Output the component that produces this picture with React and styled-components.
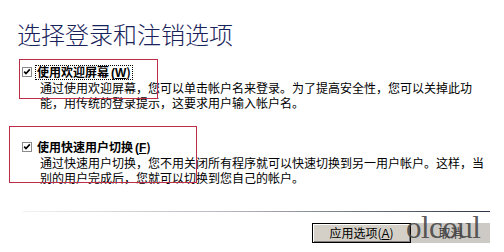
import React from 'react'
import styled, { createGlobalStyle } from 'styled-components'

const GlobalStyle = createGlobalStyle`
  html, body {
    margin: 0;
    padding: 0;
    background: #fff;
  }
  body {
    font-family: "Noto Sans CJK SC", "Noto Sans", sans-serif;
  }
`

const Page = styled.div`
  position: relative;
  width: 504px;
  height: 252px;
  box-sizing: border-box;
  padding-top: 20px;
  overflow: hidden;
  background: #fff;
`

const Title = styled.h1`
  margin: 0 0 0 17px;
  font-size: 24px;
  line-height: 28px;
  font-weight: 300;
  color: #18225a;
`

const Option = styled.div`
  margin-top: ${p => p.$gap}px;
  padding-left: 22px;
`

const LabelRow = styled.div`
  display: flex;
  align-items: center;
  gap: 3px;
  height: 14px;
`

const Label = styled.span`
  font-size: 12px;
  line-height: 12px;
  font-weight: 700;
  color: #000;
  white-space: nowrap;
  padding: 0 1px;
  border: 1px dotted ${p => (p.$focused ? '#000' : 'transparent')};
`

const Key = styled.span`
  font-family: "Liberation Sans", Arial, sans-serif;
  text-decoration: underline;
`

const Paren = styled.span`
  font-family: "Liberation Sans", Arial, sans-serif;
  margin-left: 2px;
`

const Desc = styled.div`
  margin: 2px 0 0 18px;
  font-size: 12px;
  line-height: 13px;
  color: #000;
  white-space: nowrap;
`

const Separator = styled.div`
  margin: 27px 14px 0 23px;
  height: 1px;
  background: linear-gradient(to right, #f2f2f2, #b4b6bd 45%, #2b3447);
`

const ButtonRow = styled.div`
  display: flex;
  justify-content: flex-end;
  margin: 11px 14px 0 0;
`

const Button = styled.button`
  box-sizing: border-box;
  width: ${p => p.$w}px;
  height: 20px;
  padding: 0;
  font-family: "Noto Sans CJK SC", sans-serif;
  font-size: 12px;
  line-height: 16px;
  color: ${p => (p.$faded ? '#3a3a3a' : '#000')};
  background: ${p => (p.$faded ? '#cdc9c4' : '#d4d0c8')};
  border: 1px solid ${p => (p.$faded ? '#cdc9c4' : '#000')};
  box-shadow: ${p =>
    p.$faded ? 'none' : 'inset 1px 1px #fff, inset -1px -1px #808080'};
`

const Mark = styled.div`
  position: absolute;
  left: ${p => p.$x}px;
  top: ${p => p.$y}px;
  width: ${p => p.$w}px;
  height: ${p => p.$h}px;
  border: 1px solid #bf2c45;
  box-sizing: border-box;
  pointer-events: none;
`

const Watermark = styled.div`
  position: absolute;
  left: 406px;
  top: 210px;
  font-family: "Liberation Serif", "Times New Roman", serif;
  font-size: 31px;
  line-height: 36px;
  letter-spacing: -0.5px;
  color: rgba(70, 70, 70, 0.9);
  pointer-events: none;
`

function CheckBox() {
  return (
    <svg width="10" height="10" viewBox="0 0 10 10">
      <rect x="0.5" y="0.5" width="9" height="9" fill="#fff" stroke="#8a8a8a" />
      <path d="M2.2 4.6 L4 6.6 L7.8 2.4" fill="none" stroke="#000" strokeWidth="1.6" />
    </svg>
  )
}

export default function App() {
  return (
    <Page>
      <GlobalStyle />
      <Title>选择登录和注销选项</Title>

      <Option $gap={17}>
        <LabelRow>
          <CheckBox />
          <Label $focused>
            使用欢迎屏幕<Paren>(</Paren><Key>W</Key>)
          </Label>
        </LabelRow>
        <Desc>通过使用欢迎屏幕，您可以单击帐户名来登录。为了提高安全性，您可以关掉此功</Desc>
        <Desc>能，用传统的登录提示，这要求用户输入帐户名。</Desc>
      </Option>

      <Option $gap={31}>
        <LabelRow>
          <CheckBox />
          <Label>
            使用快速用户切换<Paren>(</Paren><Key>F</Key>)
          </Label>
        </LabelRow>
        <Desc>通过快速用户切换，您不用关闭所有程序就可以快速切换到另一用户帐户。这样，当</Desc>
        <Desc>别的用户完成后，您就可以切换到您自己的帐户。</Desc>
      </Option>

      <Separator />

      <ButtonRow>
        <Button $w={99}>
          应用选项(<Key>A</Key>)
        </Button>
        <Button $w={79} $faded>
          取消
        </Button>
      </ButtonRow>

      <Mark $x={19} $y={59} $w={139} $h={40} />
      <Mark $x={9} $y={126} $w={188} $h={57} />
      <Watermark>olcoul</Watermark>
    </Page>
  )
}
